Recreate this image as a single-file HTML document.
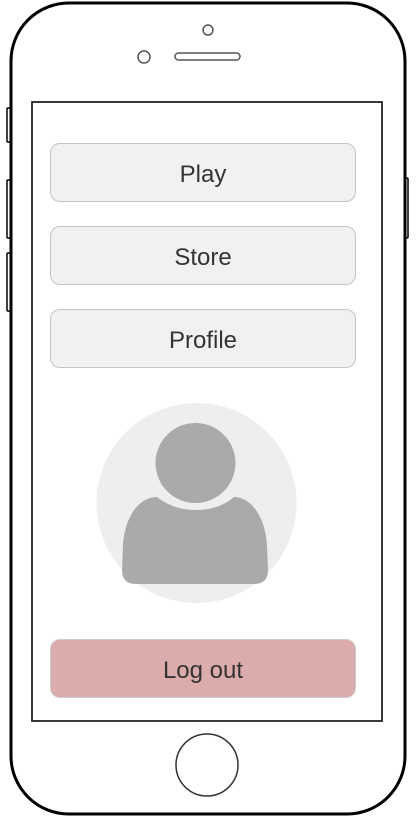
<!DOCTYPE html>
<html><head><meta charset="utf-8"><style>
html,body{margin:0;padding:0;background:#fff;width:416px;height:817px;overflow:hidden}
.btn{position:absolute;left:50px;width:306px;height:59px;box-sizing:border-box;border:1px solid #c4c4c4;border-radius:10px;background:#f1f1f1;font-family:"Liberation Sans",sans-serif;font-size:24px;color:#333;text-align:center;line-height:61px}
</style></head><body>
<svg width="416" height="817" style="position:absolute;left:0;top:0">
<rect x="7" y="108" width="5" height="34" rx="1" fill="#fff" stroke="#000" stroke-width="1.5"/>
<rect x="7" y="180" width="5" height="58" rx="1" fill="#fff" stroke="#000" stroke-width="1.5"/>
<rect x="7" y="253" width="5" height="58" rx="1" fill="#fff" stroke="#000" stroke-width="1.5"/>
<rect x="404" y="178" width="4" height="60" rx="1" fill="#fff" stroke="#000" stroke-width="1.5"/>
<rect x="11" y="3" width="394" height="811" rx="58" fill="#fff" stroke="#000" stroke-width="3"/>
<circle cx="208" cy="30" r="5" fill="none" stroke="#555" stroke-width="1.5"/>
<circle cx="144" cy="57" r="6" fill="none" stroke="#555" stroke-width="1.5"/>
<rect x="175" y="53" width="65" height="7" rx="3.5" fill="none" stroke="#555" stroke-width="1.5"/>
<rect x="32" y="102" width="350" height="619" fill="#fff" stroke="#222" stroke-width="1.8"/>
<circle cx="207" cy="765" r="31" fill="none" stroke="#333" stroke-width="1.5"/>
<circle cx="196.5" cy="503" r="100" fill="#eeeeee"/>
<circle cx="195.5" cy="463" r="40" fill="#aaaaaa"/>
<path d="M157,497 C140,497 125,515 123,545 L122,570 Q122,584 136,584 L254,584 Q268,584 268,570 L267,545 C265,515 250,497 234,497 C225,505 212,510 196,510 C180,510 167,505 157,497 Z" fill="#aaaaaa"/>
</svg>
<div class="btn" style="top:143px">Play</div>
<div class="btn" style="top:226px">Store</div>
<div class="btn" style="top:309px">Profile</div>
<div class="btn" style="top:639px;background:#dcabab;border-color:#ccc">Log out</div>
</body></html>
